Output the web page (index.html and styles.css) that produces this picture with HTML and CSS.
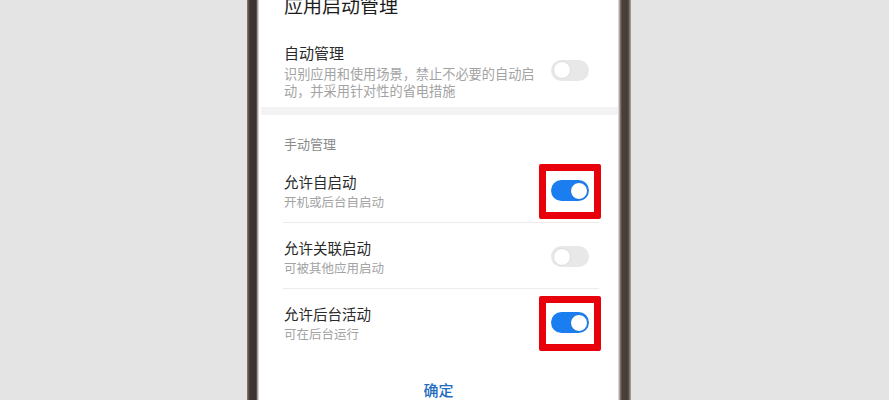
FILE: index.html
```html
<!DOCTYPE html>
<html lang="zh-CN">
<head>
<meta charset="utf-8">
<title>应用启动管理</title>
<link rel="stylesheet" href="styles.css">
</head>
<body>
<div class="stage">
  <div class="phone">
    <div class="screen">
      <h1 class="title">应用启动管理</h1>
      <div class="auto-row">
        <div class="auto-text">
          <div class="auto-name">自动管理</div>
          <div class="auto-desc">识别应用和使用场景，禁止不必要的自动启<br>动，并采用针对性的省电措施</div>
        </div>
        <span class="toggle"><span class="knob"></span></span>
      </div>
      <div class="band"></div>
      <div class="section-head">手动管理</div>
      <div class="list">
        <div class="row">
          <div class="row-text">
            <div class="row-name">允许自启动</div>
            <div class="row-desc">开机或后台自启动</div>
          </div>
          <span class="toggle on marked"><span class="knob"></span></span>
        </div>
        <div class="row">
          <div class="row-text">
            <div class="row-name">允许关联启动</div>
            <div class="row-desc">可被其他应用启动</div>
          </div>
          <span class="toggle"><span class="knob"></span></span>
        </div>
        <div class="row last">
          <div class="row-text">
            <div class="row-name">允许后台活动</div>
            <div class="row-desc">可在后台运行</div>
          </div>
          <span class="toggle on marked"><span class="knob"></span></span>
        </div>
      </div>
      <div class="actions"><span class="ok">确定</span></div>
    </div>
  </div>
</div>
</body>
</html>
```

FILE: styles.css
```css
* { box-sizing: border-box; }
html, body {
  margin: 0;
  padding: 0;
  height: 400px;
  overflow: hidden;
  background: #e4e4e4;
  font-family: "Noto Sans CJK SC", "Noto Sans", sans-serif;
}
.stage {
  display: flex;
  height: 400px;
  padding-left: 247px;
}
.phone {
  width: 384px;
  height: 400px;
  padding: 0 13px 0 12px;
  background: linear-gradient(to right,
    #95877f 0, #6a5c55 1px, #3f3532 3px, #3b3230 9px, #756a64 10px, #cfcfcf 11px, #dedede 12px,
    #dedede 371px, #cfcfcf 372px, #8b7e77 373px, #4a403b 375px, #463c38 381px, #8f837c 383px, #b4aaa4 384px);
}
.screen {
  height: 400px;
  background: #fff;
  overflow: hidden;
}
.title {
  margin: -7px 0 0 0;
  padding-left: 25px;
  font-size: 19px;
  line-height: 24px;
  font-weight: 400;
  color: #1c1c1c;
}
.auto-row {
  display: flex;
  align-items: center;
  padding: 26px 29px 8px 25px;
}
.auto-text { flex: 1; }
.auto-name {
  font-size: 15px;
  line-height: 20px;
  color: #2a2a2a;
}
.auto-desc {
  margin-top: 3px;
  font-size: 13.2px;
  line-height: 16.5px;
  color: #a3a3a3;
}
.band {
  height: 8px;
  margin-left: 2px;
  background: #f3f3f3;
}
.section-head {
  padding: 20px 0 0 25px;
  font-size: 13px;
  line-height: 18px;
  color: #8a8a8a;
}
.list {
  margin-top: 4px;
  padding: 0 19px 0 24px;
}
.row {
  display: flex;
  align-items: center;
  padding: 15px 10px 11px 1px;
  border-bottom: 1px solid #ececec;
}
.row.last { border-bottom: none; }
.row-text { flex: 1; }
.row-name {
  font-size: 14.5px;
  line-height: 20px;
  color: #2a2a2a;
}
.row-desc {
  font-size: 12.5px;
  line-height: 19px;
  color: #a3a3a3;
}
.toggle {
  position: relative;
  display: flex;
  align-items: center;
  width: 38px;
  height: 21px;
  padding: 1.5px;
  border-radius: 11px;
  background: #e8e8e8;
  flex-shrink: 0;
  margin-top: -2px;
}
.knob {
  width: 18px;
  height: 18px;
  border-radius: 50%;
  background: #fff;
  border: 1px solid #dcdcdc;
}
.toggle.on {
  background: #1a7ef0;
  justify-content: flex-end;
}
.toggle.on .knob {
  border: 1px solid #1a6fd8;
}
.toggle.marked::after {
  content: "";
  position: absolute;
  left: -12px;
  right: -12px;
  top: -16px;
  bottom: -18px;
  border: 7px solid #e8000b;
  border-radius: 2px;
}
.actions {
  display: flex;
  justify-content: center;
  padding-top: 26px;
}
.ok {
  font-size: 15px;
  line-height: 20px;
  font-weight: 500;
  color: #1f6cc0;
}
```
